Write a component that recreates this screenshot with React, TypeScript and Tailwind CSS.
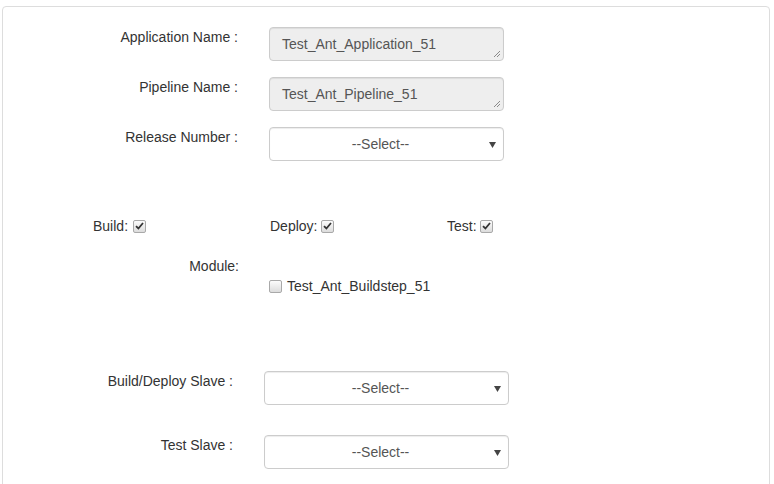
import React from 'react';

const font = { fontFamily: '"Liberation Sans", Arial, sans-serif' };

const ResizeGrip = () => (
  <svg className="absolute right-[2px] bottom-[2px]" width="8" height="8" viewBox="0 0 8 8">
    <path d="M7 1 L1 7 M7 4 L4 7" stroke="#8a8a8a" strokeWidth="1" />
  </svg>
);

const ReadonlyBox = ({ value }: { value: string }) => (
  <div className="relative w-[235px] h-[34px] bg-[#eeeeee] border border-[#cccccc] rounded-[4px] px-[12px] py-[6px] text-[14px] leading-[20px] text-[#555555] shadow-[inset_0_1px_1px_rgba(0,0,0,0.075)]">
    {value}
    <ResizeGrip />
  </div>
);

const SelectBox = ({ width }: { width: string }) => (
  <div className={`relative ${width} h-[34px] bg-white border border-[#cccccc] rounded-[4px] flex items-center justify-center pr-[12px] text-[14px] text-[#555555] shadow-[inset_0_1px_1px_rgba(0,0,0,0.075)]`}>
    <span>--Select--</span>
    <svg className="absolute right-[7px] top-[14px]" width="7" height="6" viewBox="0 0 7 6">
      <path d="M0 0 H7 L3.5 6 Z" fill="#444444" />
    </svg>
  </div>
);

const Check = ({ checked }: { checked?: boolean }) => (
  <span className="inline-flex items-center justify-center w-[13px] h-[13px] rounded-[2px] border border-[#a9a9a9] bg-gradient-to-b from-[#fcfcfc] to-[#dcdcdc]">
    {checked && (
      <svg width="9" height="8" viewBox="0 0 9 8">
        <path d="M1 4.2 L3.4 6.5 L8 1" stroke="#333333" strokeWidth="1.8" fill="none" />
      </svg>
    )}
  </span>
);

const Label = ({ text, width }: { text: string; width: string }) => (
  <div className={`${width} text-right text-[14px] leading-[20px] text-[#333333] shrink-0`}>{text}</div>
);

export default function App() {
  return (
    <div className="w-[774px] h-[484px] bg-white overflow-hidden pt-[6px] pl-[2px] pr-[4px]" style={font}>
      <div className="h-[500px] border border-[#dddddd] rounded-[4px] pt-[20px]">
        <div className="flex flex-col gap-[16px]">
          <div className="flex gap-[31px]">
            <Label text="Application Name :" width="w-[235px]" />
            <ReadonlyBox value="Test_Ant_Application_51" />
          </div>
          <div className="flex gap-[31px]">
            <Label text="Pipeline Name :" width="w-[235px]" />
            <ReadonlyBox value="Test_Ant_Pipeline_51" />
          </div>
          <div className="flex gap-[31px]">
            <Label text="Release Number :" width="w-[235px]" />
            <SelectBox width="w-[235px]" />
          </div>
        </div>

        <div className="flex pl-[90px] mt-[55px] text-[14px] leading-[20px] text-[#333333]">
          <div className="w-[177px] flex items-center gap-[5px]">
            <span>Build:</span>
            <Check checked />
          </div>
          <div className="w-[177px] flex items-center gap-[4px]">
            <span>Deploy:</span>
            <Check checked />
          </div>
          <div className="w-[177px] flex items-center gap-[3px]">
            <span>Test:</span>
            <Check checked />
          </div>
        </div>

        <div className="flex gap-[30px] mt-[20px]">
          <Label text="Module:" width="w-[236px]" />
          <div className="pt-[20px] flex items-center gap-[5px] text-[14px] leading-[20px] text-[#333333]">
            <Check />
            <span>Test_Ant_Buildstep_51</span>
          </div>
        </div>

        <div className="flex flex-col gap-[30px] mt-[75px]">
          <div className="flex gap-[31px]">
            <Label text="Build/Deploy Slave :" width="w-[230px]" />
            <SelectBox width="w-[245px]" />
          </div>
          <div className="flex gap-[31px]">
            <Label text="Test Slave :" width="w-[230px]" />
            <SelectBox width="w-[245px]" />
          </div>
        </div>
      </div>
    </div>
  );
}
